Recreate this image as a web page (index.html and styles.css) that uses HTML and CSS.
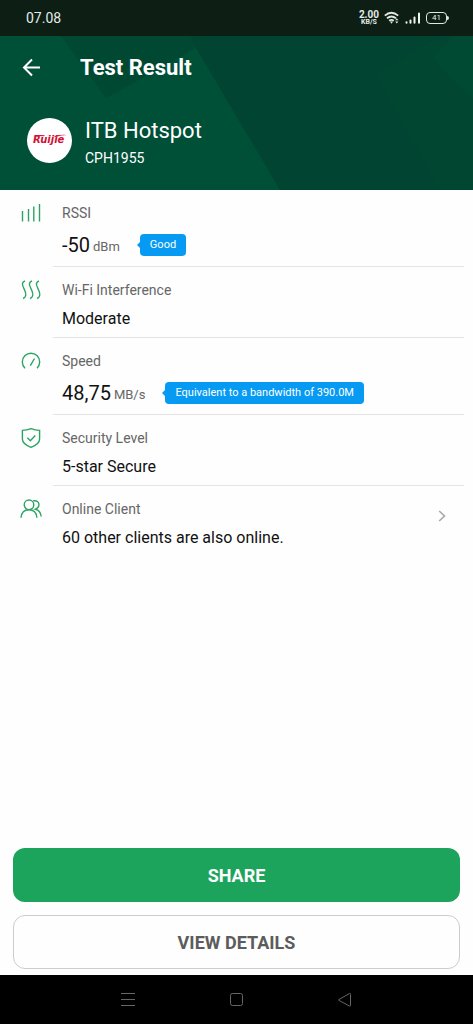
FILE: index.html
```html
<!DOCTYPE html>
<html lang="en">
<head>
<meta charset="utf-8">
<meta name="viewport" content="width=device-width, initial-scale=1">
<title>Test Result</title>
<link rel="stylesheet" href="styles.css">
</head>
<body>
<div class="statusbar">
  <span class="clock">07.08</span>
  <div class="status-icons">
    <div class="rate"><span class="rate-value">2.00</span><span class="rate-unit">KB/S</span></div>
    <svg class="wifi" width="16" height="14" viewBox="0 0 16 14" fill="none" stroke="#dfe8e2" stroke-width="1.8">
      <path d="M.8 4.600Q7.300-1 14.200 4.600M3 7.300Q7.400 3.600 12 7.300M5.200 9.800Q7.500 8 9.800 9.800"/>
      <path d="M5.900 10.600h3.200L7.500 12.800zM11.200 9.300l1.600-2 1.600 2zM11.200 10.600l1.600 2 1.600-2z" fill="#dfe8e2" stroke="none"/>
    </svg>
    <svg class="signal" width="16" height="12" viewBox="0 0 16 12" stroke="#eef4f0" stroke-width="2" stroke-linecap="round">
      <path d="M1.500 10.300v.5M5.500 8.500v2.300M9.500 5.500v5.300M14 1.500v9.300"/>
    </svg>
    <div class="battery">41</div>
  </div>
</div>

<header class="header">
  <svg class="facets" viewBox="0 0 473 154" preserveAspectRatio="none">
    <path fill="#005037" d="M0 0H473V154H0z"/>
    <path fill="#004832" d="M61 0H473V154H280L226 58 196 12 106 62z"/>
    <path fill="#004431" d="M196 12L190 0H473V154H280z"/>
    <path fill="#004732" d="M375 38L440 0H473V154H440z" opacity=".6"/>
    <path fill="#004a34" d="M432 22L455 0H473V62z"/>
  </svg>
  <div class="titlebar">
    <button class="back" aria-label="Back">
      <svg width="20" height="20" viewBox="0 0 20 20" fill="none" stroke="#fff" stroke-width="2"><path d="M18 9.500H2M10 1.500L2 9.500l8 8"/></svg>
    </button>
    <h1 class="title">Test Result</h1>
  </div>
  <div class="device">
    <div class="avatar">
      <svg width="45" height="45" viewBox="0 0 45 45">
        <text class="brand" x="6" y="25">Ruijie</text>
        <path d="M6 18.200Q10 16.600 18 17.300L17 18.300Q10 17.700 6 18.200zM27 18.300Q34 16.300 40 17.100Q34 17.300 28.500 19z" fill="#cf1238"/>
      </svg>
    </div>
    <div class="device-text">
      <p class="ssid">ITB Hotspot</p>
      <p class="model">CPH1955</p>
    </div>
  </div>
</header>

<main class="results">
  <section class="row">
    <svg class="icon" width="20" height="20" viewBox="0 0 20 20"><path d="M1.500 8v10.500M7.500 6v12.500M12.800 3.500v15M18.500 1v17.500"/></svg>
    <div class="row-body">
      <h2 class="label">RSSI</h2>
      <div class="value large"><span class="number">-50</span><span class="unit">dBm</span><span class="tip">Good</span></div>
    </div>
  </section>
  <section class="row">
    <svg class="icon" width="20" height="20" viewBox="0 0 20 20"><path d="M4 1C1 2 .8 4.500 2.500 7.500L4 11C5.500 14.500 5 17.500 2 18.500M11 1C8 2 7.800 4.500 9.500 7.500L11 11C12.500 14.500 12 17.500 9 18.500M18 1C15 2 14.800 4.500 16.500 7.500L18 11C19.500 14.500 19 17.500 16 18.500"/></svg>
    <div class="row-body">
      <h2 class="label">Wi-Fi Interference</h2>
      <div class="value">Moderate</div>
    </div>
  </section>
  <section class="row">
    <svg class="icon" width="20" height="20" viewBox="0 0 20 20"><path d="M4 17.200A8.700 8.700 0 1 1 16 17.200M9.300 14.700L13.500 7.500"/></svg>
    <div class="row-body">
      <h2 class="label">Speed</h2>
      <div class="value large"><span class="number">48,75</span><span class="unit">MB/s</span><span class="tip">Equivalent to a bandwidth of 390.0M</span></div>
    </div>
  </section>
  <section class="row">
    <svg class="icon" width="20" height="20" viewBox="0 0 20 20"><path d="M10 .7Q14 2.400 18.600 2.400V11Q18.600 16 10 19.400Q1.400 16 1.400 11V2.400Q6 2.400 10 .7zM6.300 9.700l3 3 5-5.200"/></svg>
    <div class="row-body">
      <h2 class="label">Security Level</h2>
      <div class="value">5-star Secure</div>
    </div>
  </section>
  <section class="row">
    <svg class="icon" width="20" height="20" viewBox="0 0 20 20"><circle cx="8" cy="5.800" r="4.800"/><path d="M0 18.800Q.6 10.700 8 10.700Q15.300 10.700 15.900 18.800M12.200 1.800Q18 1.200 18 6Q17.600 9 14.500 10.200Q19.600 11.500 20.200 17.500"/></svg>
    <div class="row-body">
      <h2 class="label">Online Client</h2>
      <div class="value">60 other clients are also online.</div>
    </div>
    <button class="more" aria-label="Show online clients">
      <svg width="8" height="12" viewBox="0 0 8 12" fill="none" stroke="#aaa" stroke-width="1.700"><path d="M1.200 1L6.500 6l-5.300 5"/></svg>
    </button>
  </section>
</main>

<div class="actions">
  <button class="btn primary">SHARE</button>
  <button class="btn secondary">VIEW DETAILS</button>
</div>

<nav class="navbar">
  <button class="nav-key" aria-label="Recent apps"><svg width="16" height="16" viewBox="0 0 16 16"><path d="M0 1.500h14M0 7.500h14M0 13.500h14"/></svg></button>
  <button class="nav-key" aria-label="Home"><svg width="16" height="16" viewBox="0 0 16 16"><rect x="1.500" y="1.500" width="12" height="12" rx="2"/></svg></button>
  <button class="nav-key" aria-label="Back"><svg width="16" height="16" viewBox="0 0 16 16"><path d="M13.500 2.500v11q0 1-1 .5L1.800 8.400q-.8-.4 0-.8L12.500 1.500q1-.5 1 1z"/></svg></button>
</nav>
</body>
</html>
```

FILE: styles.css
```css
* { box-sizing: border-box; margin: 0; }

body {
  display: flex;
  flex-direction: column;
  min-height: 100vh;
  background: #fefefe;
  color: #111;
  font-family: Roboto, "Noto Sans", sans-serif;
}

button {
  padding: 0;
  border: 0;
  background: none;
  font: inherit;
  cursor: pointer;
}

svg { display: block; flex: none; }

.statusbar {
  display: flex;
  align-items: center;
  justify-content: space-between;
  height: 36px;
  padding: 0 26px;
  background: #0d1e15;
  color: #e4ece7;
}

.clock { font-size: 14px; }
.status-icons { display: flex; align-items: center; gap: 5px; }

.rate {
  display: flex;
  flex-direction: column;
  align-items: center;
  font-weight: 700;
}
.rate-value { font-size: 10px; line-height: 8px; }
.rate-unit { font-size: 7px; line-height: 7px; }

.battery {
  position: relative;
  width: 21px;
  height: 12px;
  border: 1px solid #dfe8e2;
  border-radius: 4px;
  font-size: 8px;
  line-height: 10px;
  text-align: center;
}
.battery::after {
  content: "";
  position: absolute;
  top: 3px;
  right: -3px;
  width: 2px;
  height: 4px;
  border-radius: 0 2px 2px 0;
  background: #dfe8e2;
}

.header {
  position: relative;
  height: 154px;
  padding: 14px 22px 0;
  color: #fff;
}
.facets {
  position: absolute;
  inset: 0;
  z-index: -1;
  width: 100%;
  height: 100%;
}

.titlebar { display: flex; align-items: center; gap: 38px; height: 36px; }
.title { font-size: 22px; line-height: 36px; font-weight: 700; }

.device { display: flex; align-items: flex-start; gap: 13px; margin: 31px 5px 0; }
.avatar { width: 45px; height: 45px; margin-top: 1px; border-radius: 50%; background: #fff; }
.brand {
  fill: #cf1238;
  font-family: "DejaVu Sans", sans-serif;
  font-size: 10px;
  font-style: italic;
  font-weight: 700;
}
.ssid { font-size: 22px; line-height: 28px; }
.model { margin-top: 3px; font-size: 14px; line-height: 20px; }

.row {
  display: flex;
  align-items: flex-start;
  padding-left: 21px;
}
.icon {
  width: 20px;
  margin: 13px 12px 0 0;
  overflow: visible;
  fill: none;
  stroke: #2aa463;
  stroke-width: 1.4;
}
.row-body {
  flex: 1;
  margin-right: 9px;
  padding: 13px 9px 4px;
  border-bottom: 1px solid #e4e4e4;
}
.row:last-child .row-body { border-bottom: 0; }

.label {
  margin-bottom: 5px;
  color: #666;
  font-size: 14px;
  line-height: 20px;
  font-weight: 400;
}
.value { font-size: 16px; line-height: 28px; }
.large { display: flex; align-items: center; line-height: 34px; }
.number { font-size: 20px; }
.unit { margin-left: 3px; padding-top: 4px; color: #666; font-size: 13px; line-height: 30px; }

.tip {
  position: relative;
  margin-left: 20px;
  padding: 0 10px;
  border-radius: 4px;
  background: #069af3;
  color: #fff;
  font-size: 11px;
  line-height: 22px;
}
.tip::before {
  content: "";
  position: absolute;
  top: 8px;
  left: -3px;
  border: solid transparent;
  border-width: 3px 3px 3px 0;
  border-right-color: #069af3;
}

.more { margin-right: 17px; padding: 24px 10px 10px; }

.actions {
  display: flex;
  flex-direction: column;
  gap: 13px;
  margin-top: auto;
  padding: 0 13px 6px;
}
.btn {
  height: 54px;
  border-radius: 12px;
  font-size: 18px;
  font-weight: 700;
}
.primary { background: #1ca45c; color: #fff; }
.secondary { border: 1px solid #ccc; background: #fefefe; color: #5c5c5c; }

.navbar {
  display: flex;
  justify-content: center;
  gap: 60px;
  height: 49px;
  background: #000;
}
.nav-key { display: flex; align-items: center; justify-content: center; width: 48px; }
.nav-key svg { fill: none; stroke: #666; stroke-width: 1; }
```
